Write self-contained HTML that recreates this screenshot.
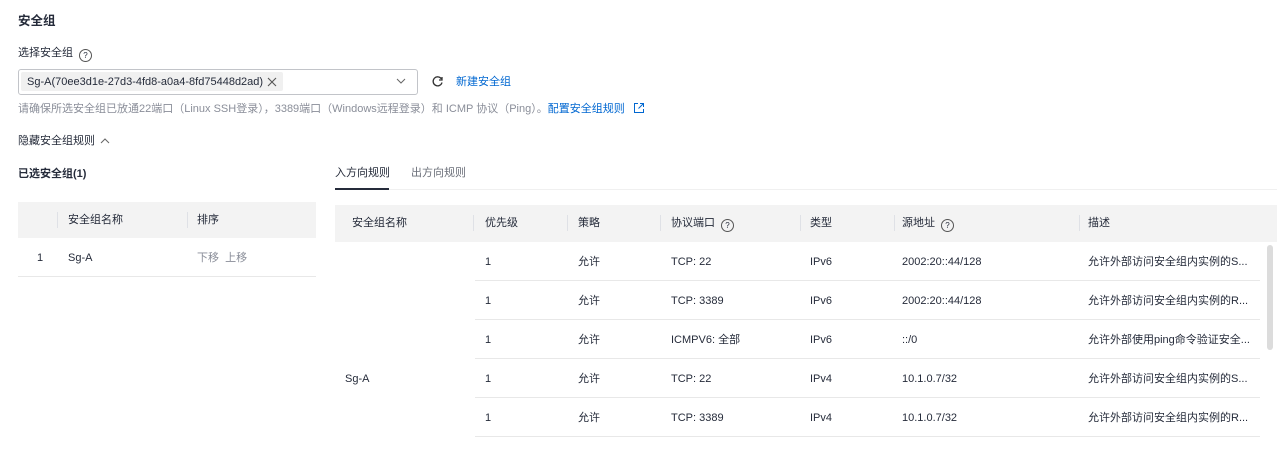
<!DOCTYPE html><html><head><meta charset="utf-8"><style>
body{margin:0;width:1280px;height:450px;overflow:hidden;background:#fff;font-family:"Liberation Sans","Noto Sans CJK SC",sans-serif;font-size:11px;color:#252b3a;position:relative}
.a{position:absolute;white-space:nowrap;line-height:14px}
.g{color:#8a8e99}.b{color:#0067d1}
.hd{position:absolute;background:#f3f3f3}
.dv{position:absolute;width:1px;height:16px;background:#dfe1e6}
.ln{position:absolute;height:1px;background:#e8e8e8}
.q{display:inline-block;width:11px;height:11px;border:1px solid #555;border-radius:50%;font-size:8px;line-height:11px;text-align:center;vertical-align:-2px;margin-left:6px}
</style></head><body>
<div class="a" style="left:18px;top:14px;font-size:12.5px;font-weight:bold">安全组</div>
<div class="a" style="left:18px;top:46px">选择安全组<span class="q">?</span></div>
<div class="a" style="left:18px;top:69px;width:398px;height:24px;border:1px solid #c2c4c9;border-radius:3px"></div>
<div class="a" style="left:21px;top:72px;height:19px;width:262px;background:#f0f0f0;border-radius:2px"></div>
<div class="a" style="left:27px;top:75px">Sg-A(70ee3d1e-27d3-4fd8-a0a4-8fd75448d2ad)</div>
<svg class="a" style="left:266px;top:76px" width="12" height="12"><path d="M2 2l8 8M10 2l-8 8" stroke="#555" stroke-width="1.1"/></svg>
<svg class="a" style="left:395px;top:76px" width="12" height="10"><path d="M2 3l4 4 4-4" stroke="#666" fill="none"/></svg>
<svg class="a" style="left:431px;top:75px" width="13" height="13"><path d="M10.5 4A4.5 4.5 0 1 0 11 7.5" stroke="#333" stroke-width="1.3" fill="none"/><path d="M11 2v3h-3" stroke="#333" stroke-width="1.3" fill="none"/></svg>
<div class="a b" style="left:456px;top:75px">新建安全组</div>
<div class="a g" style="left:18px;top:102px">请确保所选安全组已放通22端口（Linux SSH登录），3389端口（Windows远程登录）和 ICMP 协议（Ping）。<span class="b">配置安全组规则</span></div>
<svg class="a" style="left:633px;top:102px" width="12" height="12"><path d="M5 1.5H1.5v9h9V7M7 1.5h3.5V5M10.5 1.5 5.5 6.5" stroke="#0067d1" fill="none"/></svg>
<div class="a" style="left:18px;top:134px">隐藏安全组规则</div>
<svg class="a" style="left:99px;top:136px" width="12" height="10"><path d="M2 7l4-4 4 4" stroke="#666" fill="none"/></svg>
<div class="a" style="left:18px;top:167px;font-weight:bold">已选安全组(1)</div>
<div class="a" style="left:335px;top:166px">入方向规则</div>
<div class="a" style="left:411px;top:166px;color:#6c707a">出方向规则</div>
<div class="ln" style="left:335px;top:189px;width:942px;background:#f0f0f0"></div>
<div class="a" style="left:335px;top:188px;width:54px;height:2px;background:#252b3a"></div>

<div class="hd" style="left:18px;top:202px;width:298px;height:36px"></div>
<div class="dv" style="left:57px;top:212px"></div><div class="dv" style="left:187px;top:212px"></div>
<div class="a" style="left:68px;top:213px">安全组名称</div>
<div class="a" style="left:197px;top:213px">排序</div>
<div class="a" style="left:37px;top:251px">1</div>
<div class="a" style="left:68px;top:251px">Sg-A</div>
<div class="a g" style="left:197px;top:251px">下移&nbsp;&nbsp;上移</div>
<div class="ln" style="left:18px;top:276px;width:298px"></div>

<div class="hd" style="left:335px;top:205px;width:942px;height:37px"></div>
<div class="dv" style="left:473px;top:215px"></div><div class="dv" style="left:567px;top:215px"></div><div class="dv" style="left:660px;top:215px"></div><div class="dv" style="left:800px;top:215px"></div><div class="dv" style="left:894px;top:215px"></div><div class="dv" style="left:1079px;top:215px"></div>
<div class="a" style="left:352px;top:216px">安全组名称</div>
<div class="a" style="left:485px;top:216px">优先级</div>
<div class="a" style="left:578px;top:216px">策略</div>
<div class="a" style="left:671px;top:216px">协议端口<span class="q">?</span></div>
<div class="a" style="left:810px;top:216px">类型</div>
<div class="a" style="left:902px;top:216px">源地址<span class="q">?</span></div>
<div class="a" style="left:1088px;top:216px">描述</div>
<div class="a" style="left:345px;top:372px">Sg-A</div>
<div class="a" style="left:1267px;top:245px;width:6px;height:105px;background:#dcdcdc;border-radius:3px"></div>

<div class="a" style="left:485px;top:255px">1</div><div class="a" style="left:578px;top:255px">允许</div><div class="a" style="left:671px;top:255px">TCP: 22</div><div class="a" style="left:810px;top:255px">IPv6</div><div class="a" style="left:902px;top:255px">2002:20::44/128</div><div class="a" style="left:1088px;top:255px">允许外部访问安全组内实例的S...</div>
<div class="ln" style="left:475px;top:280px;width:785px"></div>
<div class="a" style="left:485px;top:294px">1</div><div class="a" style="left:578px;top:294px">允许</div><div class="a" style="left:671px;top:294px">TCP: 3389</div><div class="a" style="left:810px;top:294px">IPv6</div><div class="a" style="left:902px;top:294px">2002:20::44/128</div><div class="a" style="left:1088px;top:294px">允许外部访问安全组内实例的R...</div>
<div class="ln" style="left:475px;top:319px;width:785px"></div>
<div class="a" style="left:485px;top:333px">1</div><div class="a" style="left:578px;top:333px">允许</div><div class="a" style="left:671px;top:333px">ICMPV6: 全部</div><div class="a" style="left:810px;top:333px">IPv6</div><div class="a" style="left:902px;top:333px">::/0</div><div class="a" style="left:1088px;top:333px">允许外部使用ping命令验证安全...</div>
<div class="ln" style="left:475px;top:358px;width:785px"></div>
<div class="a" style="left:485px;top:372px">1</div><div class="a" style="left:578px;top:372px">允许</div><div class="a" style="left:671px;top:372px">TCP: 22</div><div class="a" style="left:810px;top:372px">IPv4</div><div class="a" style="left:902px;top:372px">10.1.0.7/32</div><div class="a" style="left:1088px;top:372px">允许外部访问安全组内实例的S...</div>
<div class="ln" style="left:475px;top:397px;width:785px"></div>
<div class="a" style="left:485px;top:411px">1</div><div class="a" style="left:578px;top:411px">允许</div><div class="a" style="left:671px;top:411px">TCP: 3389</div><div class="a" style="left:810px;top:411px">IPv4</div><div class="a" style="left:902px;top:411px">10.1.0.7/32</div><div class="a" style="left:1088px;top:411px">允许外部访问安全组内实例的R...</div>
<div class="ln" style="left:475px;top:436px;width:785px"></div>
</body></html>
